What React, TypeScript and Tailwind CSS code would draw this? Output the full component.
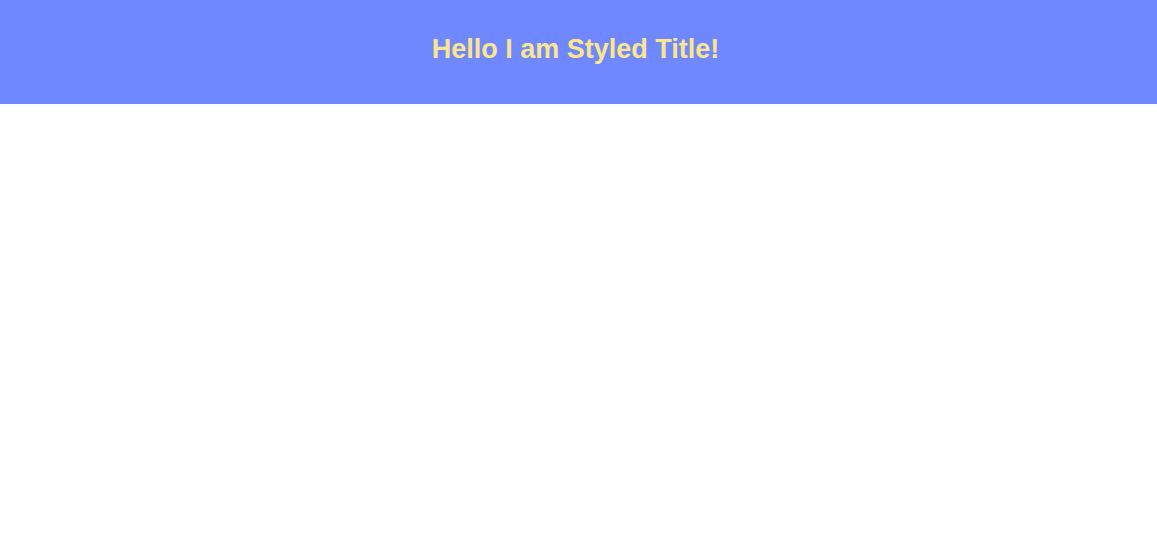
export default function App() {
  return (
    <div className="min-h-screen bg-white">
      <header className="bg-[#7088ff] pt-[33px] pb-[39px] pr-[6px] text-center">
        <h1 className="text-[27px] leading-8 font-bold text-[#fde68a] [font-family:'Liberation_Sans',Arial,sans-serif]">
          Hello I am Styled Title!
        </h1>
      </header>
    </div>
  );
}
